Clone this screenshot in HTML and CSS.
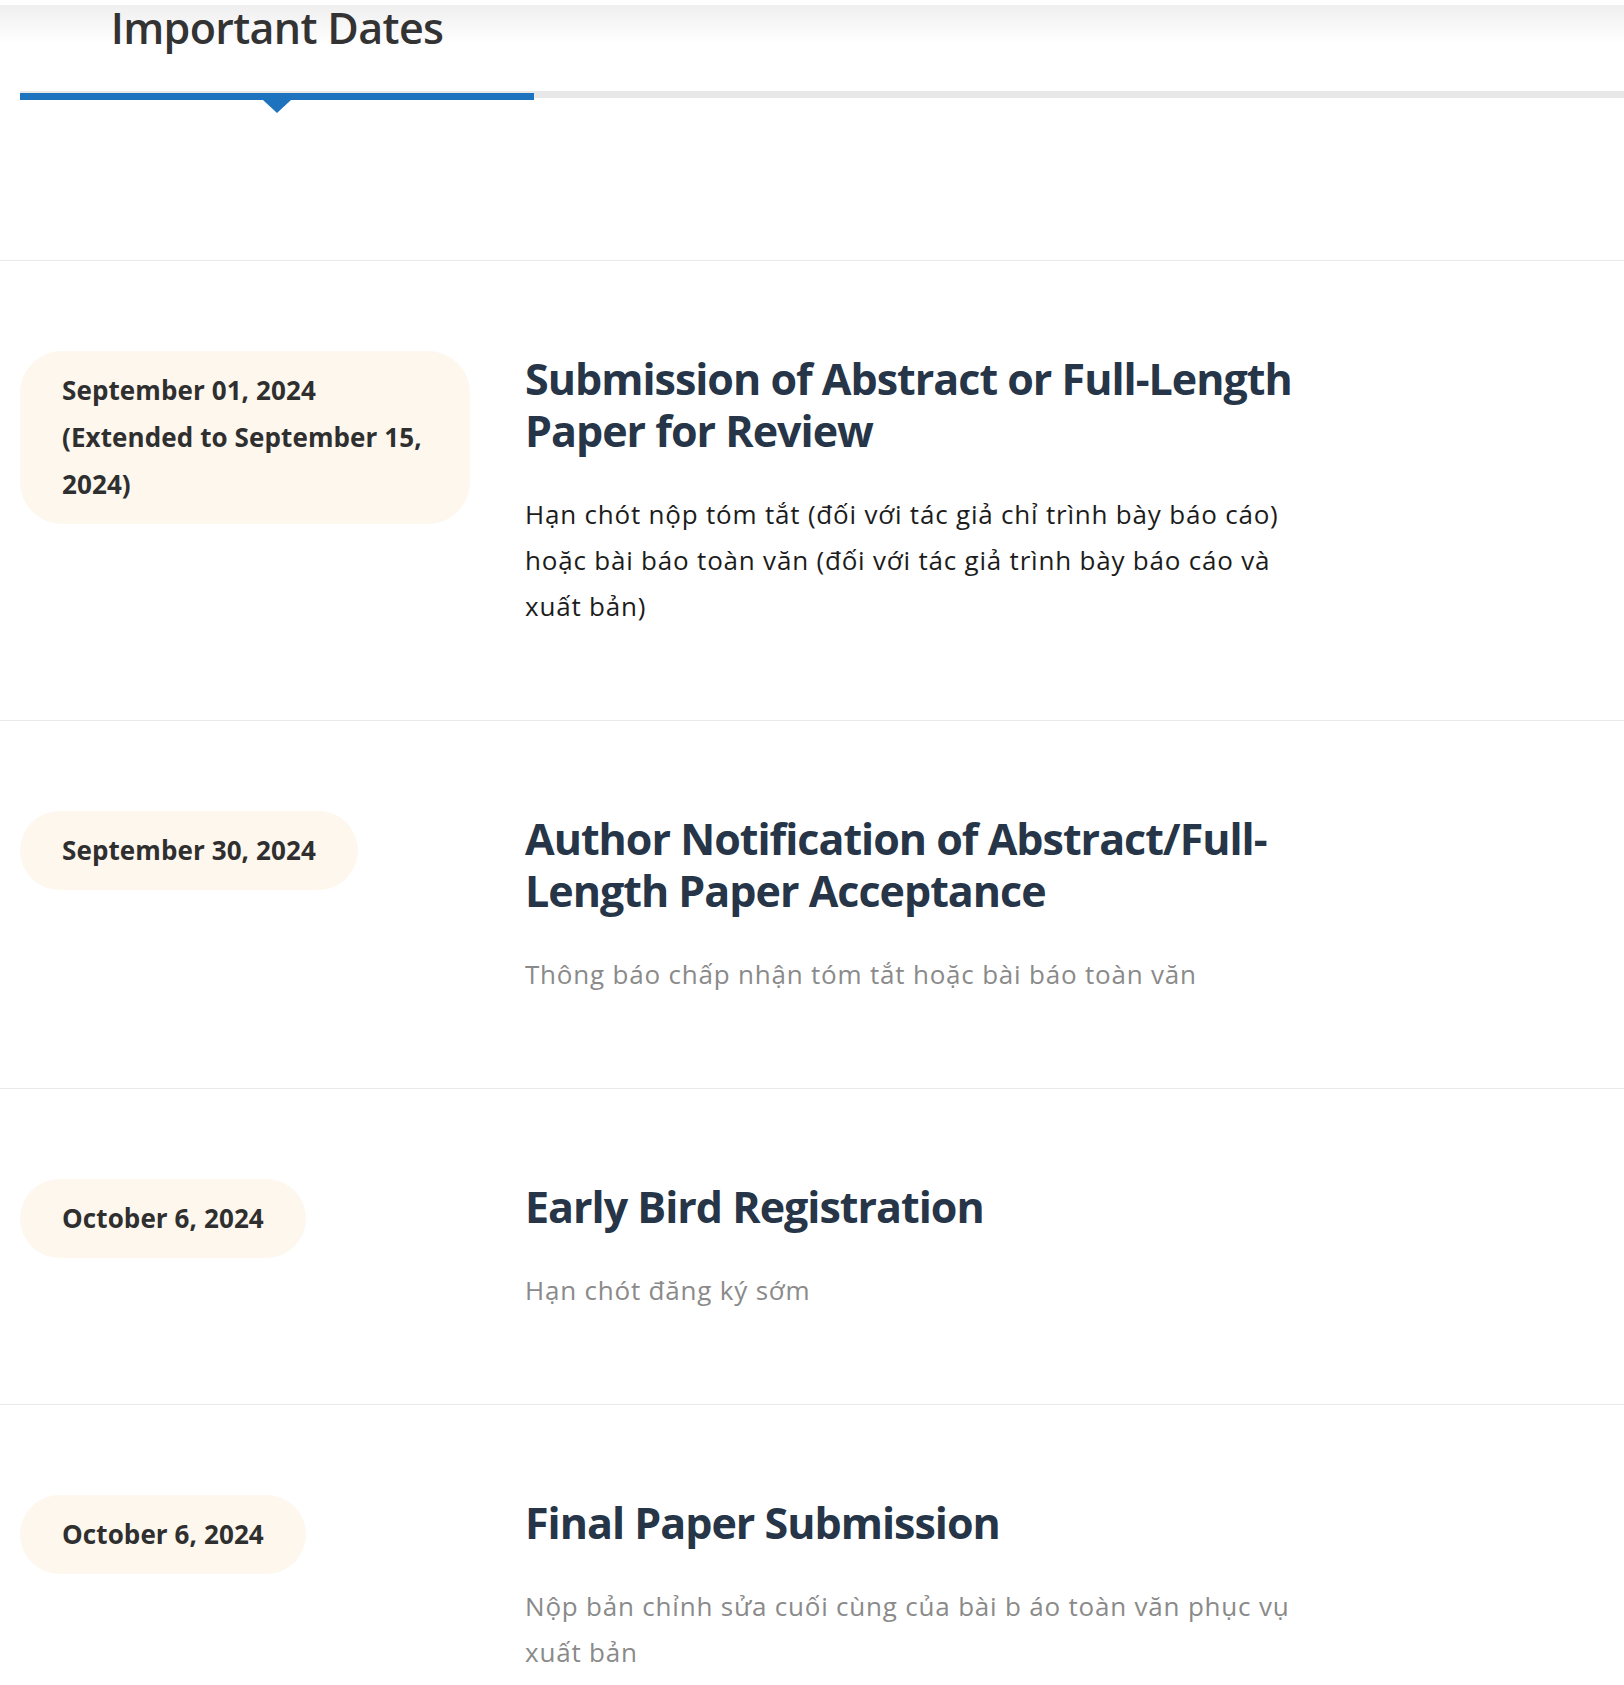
FILE: index.html
```html
<!DOCTYPE html>
<html lang="vi">
<head>
<meta charset="utf-8">
<title>Important Dates</title>
<link rel="stylesheet" href="styles.css">
</head>
<body>
<header class="section-head">
  <div class="tabs">
    <div class="tab">
      <h2 class="section-title">Important Dates</h2>
    </div>
  </div>
  <div class="tabline">
    <div class="tab-active"></div>
  </div>
</header>

<main class="dates">
  <section class="date-row">
    <div class="date-col"><div class="pill">September 01, 2024<br>(Extended to September 15, 2024)</div></div>
    <div class="info">
      <h3 class="info-title">Submission of Abstract or Full-Length Paper for Review</h3>
      <p class="info-desc dark">Hạn chót nộp tóm tắt (đối với tác giả chỉ trình bày báo cáo) hoặc bài báo toàn văn (đối với tác giả trình bày báo cáo và xuất bản)</p>
    </div>
  </section>
  <section class="date-row">
    <div class="date-col"><div class="pill">September 30, 2024</div></div>
    <div class="info">
      <h3 class="info-title">Author Notification of Abstract/Full-Length Paper Acceptance</h3>
      <p class="info-desc">Thông báo chấp nhận tóm tắt hoặc bài báo toàn văn</p>
    </div>
  </section>
  <section class="date-row">
    <div class="date-col"><div class="pill">October 6, 2024</div></div>
    <div class="info">
      <h3 class="info-title">Early Bird Registration</h3>
      <p class="info-desc">Hạn chót đăng ký sớm</p>
    </div>
  </section>
  <section class="date-row">
    <div class="date-col"><div class="pill">October 6, 2024</div></div>
    <div class="info">
      <h3 class="info-title">Final Paper Submission</h3>
      <p class="info-desc">Nộp bản chỉnh sửa cuối cùng của bài b áo toàn văn phục vụ xuất bản</p>
    </div>
  </section>
</main>
</body>
</html>
```

FILE: styles.css
```css
html, body {
  margin: 0;
  padding: 0;
  background: #ffffff;
}

body {
  font-family: "Open Sans", "Noto Sans", "Liberation Sans", sans-serif;
  color: #333333;
  overflow: hidden;
}

.section-head {
  padding-top: 7px;
  background: linear-gradient(to bottom, #ffffff 0, #ffffff 5px, #efefef 5px, #ffffff 44px, #ffffff 100%);
}

.tabs {
  display: flex;
  padding-left: 20px;
}

.tab {
  width: 514px;
  text-align: center;
}

.section-title {
  margin: 0;
  font-size: 43px;
  line-height: 42px;
  font-weight: 600;
  color: #333333;
  letter-spacing: -0.65px;
}

.tabline {
  margin: 42px 0 0 20px;
  height: 7px;
  background: #e8e8e8;
}

.tab-active {
  position: relative;
  top: 2px;
  width: 514px;
  height: 7px;
  background: #1e73be;
}

.tab-active::after {
  content: "";
  position: absolute;
  left: 50%;
  top: 7px;
  margin-left: -14px;
  border-left: 14px solid transparent;
  border-right: 14px solid transparent;
  border-top: 13px solid #1e73be;
}

.dates {
  margin-top: 162px;
}

.date-row {
  display: grid;
  grid-template-columns: 505px 790px;
  border-top: 1px solid #e9e9e9;
  padding: 90px 0 91px 20px;
}

.date-col {
  display: flex;
  align-items: flex-start;
}

.pill {
  display: inline-block;
  max-width: 366px;
  padding: 16px 42px;
  background: #fdf7ee;
  border-radius: 42px;
  font-size: 26px;
  line-height: 47px;
  font-weight: 700;
  color: #2f2f2f;
  letter-spacing: 0.1px;
}

.info-title {
  margin: 2px 0 34px;
  font-size: 43px;
  line-height: 52px;
  font-weight: 700;
  color: #263547;
  letter-spacing: -1px;
}

.info-desc {
  margin: 0;
  font-size: 26px;
  line-height: 46px;
  font-weight: 400;
  color: #8a8a8a;
  letter-spacing: 0.8px;
}

.info-desc.dark {
  color: #1c1c1c;
}
```
